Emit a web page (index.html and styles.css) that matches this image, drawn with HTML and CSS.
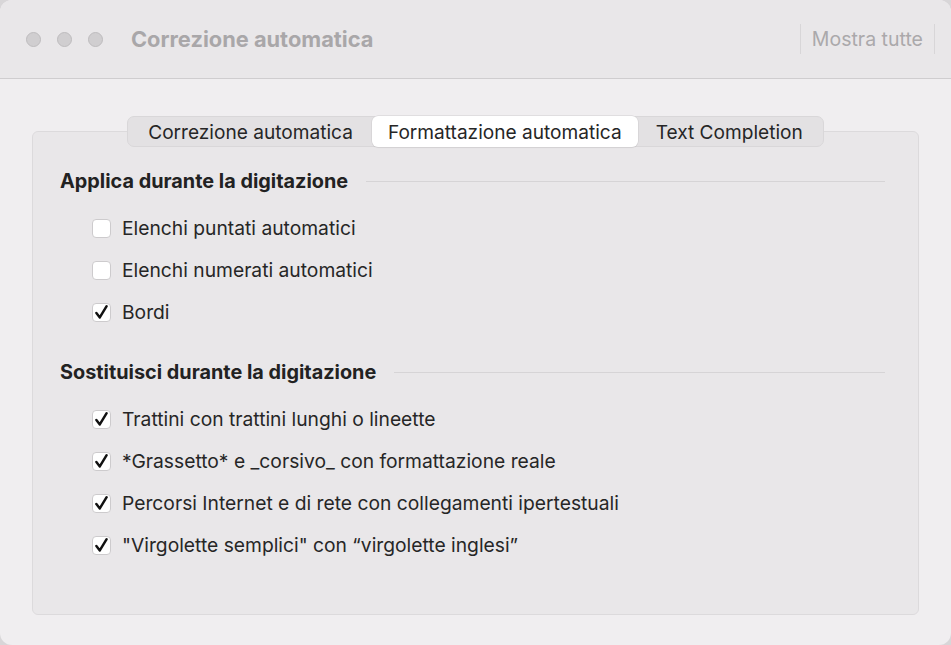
FILE: index.html
```html
<!DOCTYPE html>
<html lang="it">
<head>
<meta charset="utf-8">
<title>Correzione automatica</title>
<link rel="stylesheet" href="styles.css">
</head>
<body>
<div class="window">
  <header class="titlebar">
    <div class="lights">
      <span class="light"></span>
      <span class="light"></span>
      <span class="light"></span>
    </div>
    <div class="title">Correzione automatica</div>
    <div class="showall">Mostra tutte</div>
  </header>
  <main class="content">
    <div class="tabs">
      <div class="tab">Correzione automatica</div>
      <div class="tab active">Formattazione automatica</div>
      <div class="tab last">Text Completion</div>
    </div>
    <section class="group">
      <div class="sect-head"><span>Applica durante la digitazione</span><i class="rule"></i></div>
      <div class="rows">
        <label class="row"><span class="box"></span><span>Elenchi puntati automatici</span></label>
        <label class="row"><span class="box"></span><span>Elenchi numerati automatici</span></label>
        <label class="row"><span class="box checked"><svg viewBox="0 0 20 20"><path d="M4.6 10.6 L8.2 15.2 L15.4 3.4"/></svg></span><span>Bordi</span></label>
      </div>
      <div class="sect-head second"><span>Sostituisci durante la digitazione</span><i class="rule"></i></div>
      <div class="rows">
        <label class="row"><span class="box checked"><svg viewBox="0 0 20 20"><path d="M4.6 10.6 L8.2 15.2 L15.4 3.4"/></svg></span><span>Trattini con trattini lunghi o lineette</span></label>
        <label class="row"><span class="box checked"><svg viewBox="0 0 20 20"><path d="M4.6 10.6 L8.2 15.2 L15.4 3.4"/></svg></span><span>*Grassetto* e _corsivo_ con formattazione reale</span></label>
        <label class="row"><span class="box checked"><svg viewBox="0 0 20 20"><path d="M4.6 10.6 L8.2 15.2 L15.4 3.4"/></svg></span><span>Percorsi Internet e di rete con collegamenti ipertestuali</span></label>
        <label class="row"><span class="box checked"><svg viewBox="0 0 20 20"><path d="M4.6 10.6 L8.2 15.2 L15.4 3.4"/></svg></span><span>"Virgolette semplici" con “virgolette inglesi”</span></label>
      </div>
    </section>
  </main>
</div>
</body>
</html>
```

FILE: styles.css
```css
html, body {
  margin: 0;
  padding: 0;
  background: #d8d6d8;
}
body {
  font-family: Inter, "Noto Sans", "Liberation Sans", sans-serif;
  color: #262626;
}
.window {
  width: 951px;
  height: 645px;
  box-sizing: border-box;
  background: #f0eef0;
  border-radius: 12px;
  overflow: hidden;
  display: flex;
  flex-direction: column;
}
.titlebar {
  height: 78px;
  flex: none;
  background: #e9e7e9;
  border-bottom: 1px solid #cfcdcf;
  display: flex;
  align-items: center;
  padding-left: 26px;
  padding-right: 16px;
}
.lights {
  display: flex;
  gap: 16px;
}
.light {
  width: 13px;
  height: 13px;
  border-radius: 50%;
  background: #d0ced0;
  border: 1px solid #bebcbe;
}
.title {
  margin-left: 28px;
  font-size: 21.8px;
  font-weight: 700;
  color: #a9a7a9;
}
.showall {
  margin-left: auto;
  height: 30px;
  line-height: 30px;
  padding: 0 11px;
  border-left: 1px solid #d8d6d8;
  border-right: 1px solid #d8d6d8;
  font-size: 19.5px;
  color: #aba9ab;
}
.content {
  flex: 1;
  padding: 37px 32px 30px;
  display: flex;
  flex-direction: column;
  align-items: center;
}
.tabs {
  position: relative;
  z-index: 1;
  height: 31px;
  box-sizing: border-box;
  display: flex;
  align-items: stretch;
  background: #e3e1e3;
  border: 1px solid #d9d7d9;
  border-radius: 7px;
}
.tab {
  display: flex;
  align-items: center;
  padding: 0 19px 0 20px;
  font-size: 19.1px;
  color: #262626;
}
.tab.last {
  padding: 0 20px 0 18px;
}
.tab.active {
  background: #ffffff;
  border-radius: 6px;
  box-shadow: 0 0 0 0.5px #d0ced0, 0 1px 1px rgba(0,0,0,0.08);
  padding: 0 16px;
  margin: -1px 0;
}
.group {
  align-self: stretch;
  flex: 1;
  margin-top: -16px;
  background: #e9e7e9;
  border: 1px solid #dcdadc;
  border-radius: 6px;
  padding: 37px 33px 0 27px;
}
.sect-head {
  height: 24px;
  display: flex;
  align-items: center;
  gap: 18px;
  font-size: 19.85px;
  font-weight: 700;
  color: #222;
}
.sect-head.second {
  margin-top: 27px;
}
.rule {
  flex: 1;
  height: 1px;
  background: #d6d4d6;
}
.rows {
  margin-top: 14px;
  padding-left: 32px;
}
.row {
  height: 42px;
  display: flex;
  align-items: center;
  gap: 11px;
  font-size: 19.25px;
}
.box {
  position: relative;
  width: 17px;
  height: 17px;
  flex: none;
  background: #ffffff;
  border: 1px solid #cdcbcd;
  border-radius: 4px;
}
.box svg {
  position: absolute;
  left: -1px;
  top: -1px;
  width: 19px;
  height: 19px;
  overflow: visible;
}
.box svg path {
  fill: none;
  stroke: #111;
  stroke-width: 2.6;
  stroke-linecap: round;
  stroke-linejoin: round;
}
```
